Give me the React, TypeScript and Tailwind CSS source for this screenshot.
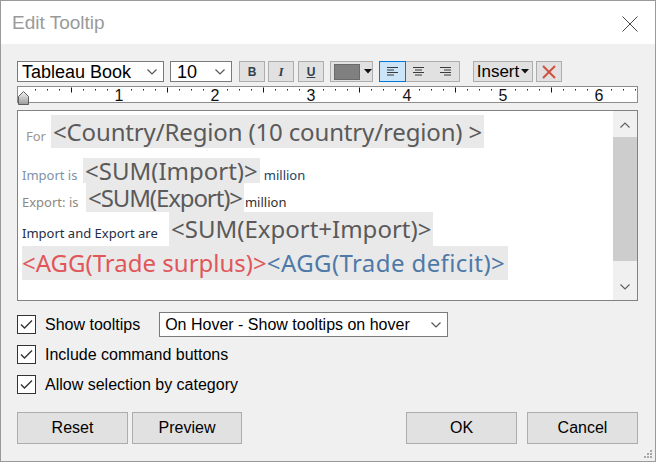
import { FC, ReactNode } from 'react';

const ui = "font-['Liberation_Sans',Arial,sans-serif]";
const tab = "font-['Noto_Sans','Open_Sans',sans-serif]";

const Chevron: FC<{ up?: boolean; color?: string }> = ({ up, color = '#555' }) => (
  <svg width="10" height="6" viewBox="0 0 10 6">
    <polyline
      points={up ? '0.5,5.5 5,1 9.5,5.5' : '0.5,0.5 5,5 9.5,0.5'}
      fill="none"
      stroke={color}
      strokeWidth="1.2"
    />
  </svg>
);

const Caret: FC = () => (
  <svg width="8" height="5" viewBox="0 0 8 5">
    <polygon points="0,0 8,0 4,4.5" fill="#111" />
  </svg>
);

const ToolBtn: FC<{ className?: string; children: ReactNode }> = ({ className = '', children }) => (
  <div
    className={`h-[21px] flex items-center justify-center bg-[#e1e1e1] border border-[#adadad] ${className}`}
  >
    {children}
  </div>
);

// alignment glyph: 4 lines of alternating length
const AlignIcon: FC<{ align: 'left' | 'center' | 'right' }> = ({ align }) => {
  const rows = [11, 7, 11, 7];
  return (
    <svg width="11" height="9" viewBox="0 0 11 9">
      {rows.map((w, i) => {
        const x = align === 'left' ? 0 : align === 'center' ? (11 - w) / 2 : 11 - w;
        return <rect key={i} x={x} y={i * 2.5} width={w} height="1" fill="#3a3a3a" />;
      })}
    </svg>
  );
};

const Ruler: FC = () => {
  const origin = 6; // relative to ruler left edge (x=17)
  const step = 12;
  const marks: ReactNode[] = [];
  for (let k = 1; origin + k * step < 619; k++) {
    const x = origin + k * step;
    if (k % 8 === 0) {
      marks.push(
        <text key={k} x={x} y="14.5" textAnchor="middle" fontSize="16" fill="#111"
          fontFamily="Liberation Sans, Arial, sans-serif">
          {k / 8}
        </text>
      );
    } else if (k % 4 === 0) {
      marks.push(<rect key={k} x={x} y="1.5" width="1" height="5" fill="#111" />);
    } else {
      marks.push(<rect key={k} x={x} y="3" width="1" height="1.5" fill="#222" />);
    }
  }
  return (
    <div className="relative mt-[4px] h-[17px]">
      <svg width="621" height="17" viewBox="0 0 621 17" className="block">
        <rect x="0.5" y="0.5" width="620" height="16" fill="#fff" stroke="#8c8c8c" />
        {marks}
      </svg>
      {/* indent thumb */}
      <svg width="11" height="14" viewBox="0 0 11 14" className="absolute left-[1px] top-[5px]">
        <defs>
          <linearGradient id="thumb" x1="0" y1="0" x2="0" y2="1">
            <stop offset="0" stopColor="#f4f4f4" />
            <stop offset="1" stopColor="#9a9a9a" />
          </linearGradient>
        </defs>
        <polygon points="5.5,0.5 10.5,5.5 10.5,13.5 0.5,13.5 0.5,5.5" fill="url(#thumb)" stroke="#5e5e5e" />
      </svg>
    </div>
  );
};

const Check: FC<{ label: string; className?: string }> = ({ label, className = '' }) => (
  <div className={`flex items-center h-[25px] ${className}`}>
    <div className="w-[19px] h-[19px] border border-[#333] bg-white flex items-center justify-center">
      <svg width="13" height="11" viewBox="0 0 13 11">
        <polyline points="1,5.5 4.5,9 12,1.5" fill="none" stroke="#333" strokeWidth="1.4" />
      </svg>
    </div>
    <span className="ml-[9px] text-[16px] text-black">{label}</span>
  </div>
);

const Button: FC<{ label: string; className?: string }> = ({ label, className = '' }) => (
  <div
    className={`h-[32px] flex items-center justify-center bg-[#e1e1e1] border border-[#adadad] text-[16px] text-black ${className}`}
  >
    {label}
  </div>
);

const hl = `inline-block bg-[#e9e9e9] text-[24px] whitespace-nowrap ${tab}`;
const small = `inline-block text-[13px] leading-[16px] whitespace-nowrap ${tab}`;

const App: FC = () => {
  return (
    <div className={`w-[656px] h-[462px] bg-[#f0f0f0] border border-[#9a9a9a] relative overflow-hidden ${ui}`}>
      {/* Title bar */}
      <div className="h-[43px] bg-white flex items-center justify-between pl-[11px] pr-[17px]">
        <span className="text-[19px] text-[#9a9a9a] pt-[2px]">Edit Tooltip</span>
        <svg width="16" height="16" viewBox="0 0 16 16" className="mt-[2px]">
          <line x1="0.5" y1="0.5" x2="15.5" y2="15.5" stroke="#444" strokeWidth="1" />
          <line x1="15.5" y1="0.5" x2="0.5" y2="15.5" stroke="#444" strokeWidth="1" />
        </svg>
      </div>

      <div className="pl-[16px] pr-[17px]">
        {/* Toolbar */}
        <div className="mt-[17px] flex items-center h-[21px]">
          <div className="w-[147px] h-[21px] bg-white border border-[#7a7a7a] flex items-center justify-between pl-[4px] pr-[6px]">
            <span className="text-[18px] leading-none text-black">Tableau Book</span>
            <Chevron />
          </div>
          <div className="ml-[6px] w-[62px] h-[21px] bg-white border border-[#7a7a7a] flex items-center justify-between pl-[6px] pr-[6px]">
            <span className="text-[18px] leading-none text-black">10</span>
            <Chevron />
          </div>
          <ToolBtn className="ml-[7px] w-[26px]">
            <span className="text-[12px] font-bold text-[#34404e]">B</span>
          </ToolBtn>
          <ToolBtn className="ml-[3px] w-[26px]">
            <span className="text-[13px] font-bold italic text-[#34404e] font-['Liberation_Serif',serif]">I</span>
          </ToolBtn>
          <ToolBtn className="ml-[4px] w-[26px]">
            <span className="text-[12px] font-bold underline text-[#34404e]">U</span>
          </ToolBtn>
          <ToolBtn className="ml-[6px] w-[43px] justify-start pl-[3px] gap-[4px]">
            <div className="w-[26px] h-[16px] bg-[#808080] border border-[#6a6a6a]" />
            <Caret />
          </ToolBtn>
          <div className="ml-[6px] w-[81px] h-[21px] flex bg-[#e1e1e1] border border-[#adadad]">
            <div className="w-[27px] -m-[1px] h-[21px] bg-[#cce4f7] border border-[#0078d7] flex items-center justify-center">
              <AlignIcon align="left" />
            </div>
            <div className="w-[27px] flex items-center justify-center">
              <AlignIcon align="center" />
            </div>
            <div className="w-[26px] flex items-center justify-center">
              <AlignIcon align="right" />
            </div>
          </div>
          <ToolBtn className="ml-[13px] w-[60px] gap-[2px]">
            <span className="text-[17px] leading-none text-black">Insert</span>
            <Caret />
          </ToolBtn>
          <ToolBtn className="ml-[3px] w-[26px]">
            <svg width="14" height="14" viewBox="0 0 14 14">
              <line x1="1" y1="1" x2="13" y2="13" stroke="#d0503c" strokeWidth="2" />
              <line x1="13" y1="1" x2="1" y2="13" stroke="#d0503c" strokeWidth="2" />
            </svg>
          </ToolBtn>
        </div>

        <Ruler />

        {/* Editor */}
        <div className="mt-[7px] h-[191px] bg-white border border-[#828282] flex">
          <div className="flex-1 pl-[4px] pt-[4px] text-[#5a5a5a]">
            <div className="flex items-baseline">
              <span className={`${small} ml-[4px] w-[25px] text-[#9c948e]`}>For</span>
              <span className={`${hl} leading-[33px] px-[2px] tracking-[-0.15px]`}>
                {'<Country/Region (10 country/region) >'}
              </span>
            </div>
            <div className="flex items-baseline mt-[10px]">
              <span className={`${small} w-[61px] text-[#7d91a8]`}>Import is</span>
              <span className={`${hl} leading-[25px] px-[2px]`}>{'<SUM(Import)>'}</span>
              <span className={`${small} ml-[4px] text-[#243f63]`}>million</span>
            </div>
            <div className="flex items-baseline">
              <span className={`${small} w-[64px] text-[#8e8782]`}>Export: is</span>
              <span className={`${hl} leading-[29px] px-[2px] tracking-[-1.1px]`}>{'<SUM(Export)>'}</span>
              <span className={`${small} ml-[1px] text-[#2e2e2e]`}>million</span>
            </div>
            <div className="flex items-baseline">
              <span className={`${small} w-[147px] text-[#1f2d45]`}>Import and Export are</span>
              <span className={`${hl} leading-[34px] px-[2px]`}>{'<SUM(Export+Import)>'}</span>
            </div>
            <div className="flex items-baseline">
              <span className={`${hl} leading-[34px] w-[486px]`}>
                <span className="text-[#e15759]">{'<AGG(Trade surplus)>'}</span>
                <span className="text-[#4e79a7] tracking-[0.4px]">{'<AGG(Trade deficit)>'}</span>
              </span>
            </div>
          </div>
          {/* scrollbar */}
          <div className="w-[24px] bg-[#f0f0f0] flex flex-col">
            <div className="h-[26px] flex items-center justify-center pt-[2px]">
              <Chevron up color="#606060" />
            </div>
            <div className="h-[124px] bg-[#cdcdcd]" />
            <div className="flex-1" />
            <div className="h-[26px] flex items-center justify-center">
              <Chevron color="#606060" />
            </div>
          </div>
        </div>

        {/* Options */}
        <div className="mt-[11px] flex items-center">
          <Check label="Show tooltips" />
          <div className="ml-[19px] w-[289px] h-[25px] bg-white border border-[#7a7a7a] flex items-center justify-between pl-[5px] pr-[6px]">
            <span className="text-[16px] text-black">On Hover - Show tooltips on hover</span>
            <Chevron />
          </div>
        </div>
        <Check label="Include command buttons" className="mt-[5px]" />
        <Check label="Allow selection by category" className="mt-[5px]" />

        {/* Buttons */}
        <div className="mt-[15px] flex">
          <Button label="Reset" className="w-[111px]" />
          <Button label="Preview" className="ml-[4px] w-[110px]" />
          <div className="flex-1" />
          <Button label="OK" className="w-[111px]" />
          <Button label="Cancel" className="ml-[10px] w-[111px]" />
        </div>
      </div>

      {/* size grip */}
      <svg width="10" height="10" viewBox="0 0 10 10" className="absolute right-[2px] bottom-[2px]">
        {[
          [7, 1],
          [4, 4],
          [7, 4],
          [1, 7],
          [4, 7],
          [7, 7],
        ].map(([x, y], i) => (
          <rect key={i} x={x} y={y} width="2" height="2" fill="#a8a8a8" />
        ))}
      </svg>
    </div>
  );
};

export default App;
